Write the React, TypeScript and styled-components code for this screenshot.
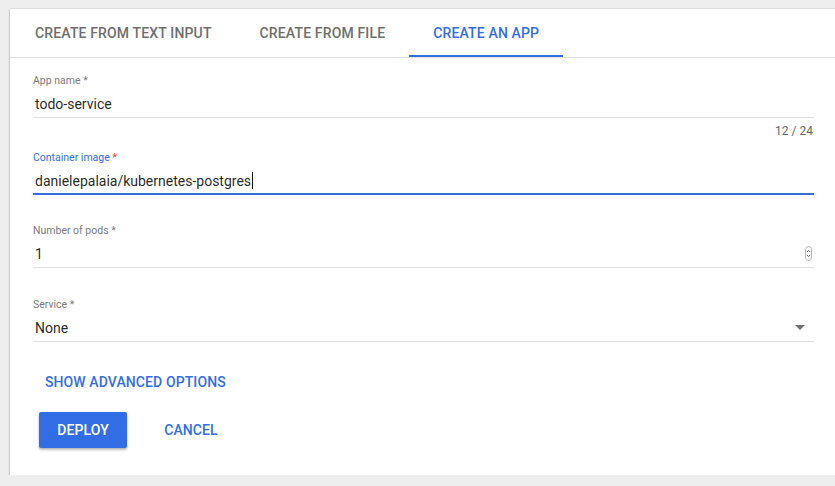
import React from "react";
import styled, { createGlobalStyle } from "styled-components";

const Global = createGlobalStyle`
  html, body { margin: 0; padding: 0; background: #eeeeee; overflow: hidden; }
  body { font-family: Roboto, "Liberation Sans", Arial, sans-serif; -webkit-font-smoothing: antialiased; }
  * { box-sizing: border-box; }
`;

const BLUE = "#326de6";

const Page = styled.div`
  padding: 9px 0 0 10px;
  width: 837px;
`;

const Card = styled.div`
  background: #fff;
  width: 827px;
  box-shadow: 0 1px 2px rgba(0, 0, 0, 0.35), 0 0 1px rgba(0, 0, 0, 0.25);
  padding-bottom: 27px;
`;

const TabBar = styled.div`
  display: flex;
  height: 49px;
  padding-left: 1px;
  border-bottom: 1px solid #e0e0e0;
`;

const Tab = styled.div<{ $active?: boolean }>`
  display: flex;
  align-items: center;
  height: 48px;
  padding: 2px 24px 0;
  font-size: 14px;
  font-weight: 500;
  letter-spacing: 0.15px;
  text-transform: uppercase;
  color: ${(p) => (p.$active ? BLUE : "#6e6e6e")};
  border-bottom: 2px solid ${(p) => (p.$active ? BLUE : "transparent")};
  white-space: nowrap;
`;

const Form = styled.div`
  padding: 14px 23px 0 23px;
`;

const Field = styled.div`
  display: flex;
  flex-direction: column;
`;

const Label = styled.label<{ $focused?: boolean }>`
  display: block;
  height: 16px;
  padding-top: 2px;
  line-height: 14px;
  font-size: 10.5px;
  color: ${(p) => (p.$focused ? BLUE : "#7a7a7a")};
`;

const Required = styled.span<{ $focused?: boolean }>`
  color: ${(p) => (p.$focused ? "#e53935" : "inherit")};
`;

const InputRow = styled.div<{ $focused?: boolean }>`
  display: flex;
  align-items: center;
  height: 30px;
  padding: 6px 0 ${(p) => (p.$focused ? 2 : 3)}px 2px;
  border-bottom: ${(p) => (p.$focused ? `2px solid ${BLUE}` : "1px solid #e0e0e0")};
  font-size: 14px;
  line-height: 20px;
  color: rgba(0, 0, 0, 0.87);
`;

const Value = styled.span`
  flex: 1;
  white-space: nowrap;
`;

const Caret = styled.span`
  display: inline-block;
  width: 1px;
  height: 17px;
  background: #111;
  vertical-align: -3px;
  margin-left: 1px;
`;

const Subscript = styled.div<{ $h: number }>`
  height: ${(p) => p.$h}px;
  display: flex;
  justify-content: flex-end;
  align-items: flex-start;
`;

const Counter = styled.span`
  margin-top: 6px;
  font-size: 12px;
  line-height: 14px;
  color: #666;
  padding-right: 1px;
`;

const Spinner = styled.svg`
  margin-right: 2px;
  margin-top: -1px;
`;

const Arrow = styled.svg`
  margin-right: 9px;
  margin-top: -1px;
`;

const LinkButton = styled.button`
  display: inline-flex;
  align-items: center;
  height: 36px;
  padding: 0 12px;
  border: none;
  background: transparent;
  font-family: inherit;
  font-size: 14px;
  font-weight: 500;
  letter-spacing: 0.1px;
  text-transform: uppercase;
  color: ${BLUE};
  cursor: pointer;
`;

const Actions = styled.div`
  display: flex;
  gap: 20px;
  margin-top: 12px;
  padding-left: 6px;
`;

const Button = styled.button<{ $primary?: boolean }>`
  min-width: 88px;
  height: 36px;
  padding: 0 16px;
  border: none;
  border-radius: 2px;
  font-family: inherit;
  font-size: 14px;
  font-weight: 500;
  letter-spacing: 0.1px;
  text-transform: uppercase;
  background: ${(p) => (p.$primary ? BLUE : "transparent")};
  color: ${(p) => (p.$primary ? "#fff" : BLUE)};
  box-shadow: ${(p) =>
    p.$primary ? "0 2px 3px rgba(0,0,0,0.22), 0 1px 2px rgba(0,0,0,0.14)" : "none"};
  cursor: pointer;
`;

export default function App() {
  return (
    <>
      <Global />
      <Page>
        <Card>
          <TabBar>
            <Tab>Create from text input</Tab>
            <Tab>Create from file</Tab>
            <Tab $active>Create an app</Tab>
          </TabBar>
          <Form>
            <Field>
              <Label>App name *</Label>
              <InputRow>
                <Value>todo-service</Value>
              </InputRow>
              <Subscript $h={31}>
                <Counter>12 / 24</Counter>
              </Subscript>
            </Field>
            <Field>
              <Label $focused>
                Container image <Required $focused>*</Required>
              </Label>
              <InputRow $focused>
                <Value>
                  danielepalaia/kubernetes-postgres
                  <Caret />
                </Value>
              </InputRow>
              <Subscript $h={27} />
            </Field>
            <Field>
              <Label>Number of pods *</Label>
              <InputRow>
                <Value>1</Value>
                <Spinner width="7" height="15" viewBox="0 0 7 15">
                  <rect x="0.5" y="0.5" width="6" height="14" rx="3" fill="#fff" stroke="#b5b5b5" />
                  <path d="M2 6 L3.5 4.5 L5 6" fill="none" stroke="#555" strokeWidth="0.9" />
                  <path d="M2 9 L3.5 10.5 L5 9" fill="none" stroke="#555" strokeWidth="0.9" />
                </Spinner>
              </InputRow>
              <Subscript $h={28} />
            </Field>
            <Field>
              <Label>Service *</Label>
              <InputRow>
                <Value>None</Value>
                <Arrow width="10" height="5" viewBox="0 0 10 5">
                  <path d="M0 0 L10 0 L5 5 Z" fill="#6f6f6f" />
                </Arrow>
              </InputRow>
              <Subscript $h={22} />
            </Field>
            <LinkButton>Show advanced options</LinkButton>
            <Actions>
              <Button $primary>Deploy</Button>
              <Button>Cancel</Button>
            </Actions>
          </Form>
        </Card>
      </Page>
    </>
  );
}
